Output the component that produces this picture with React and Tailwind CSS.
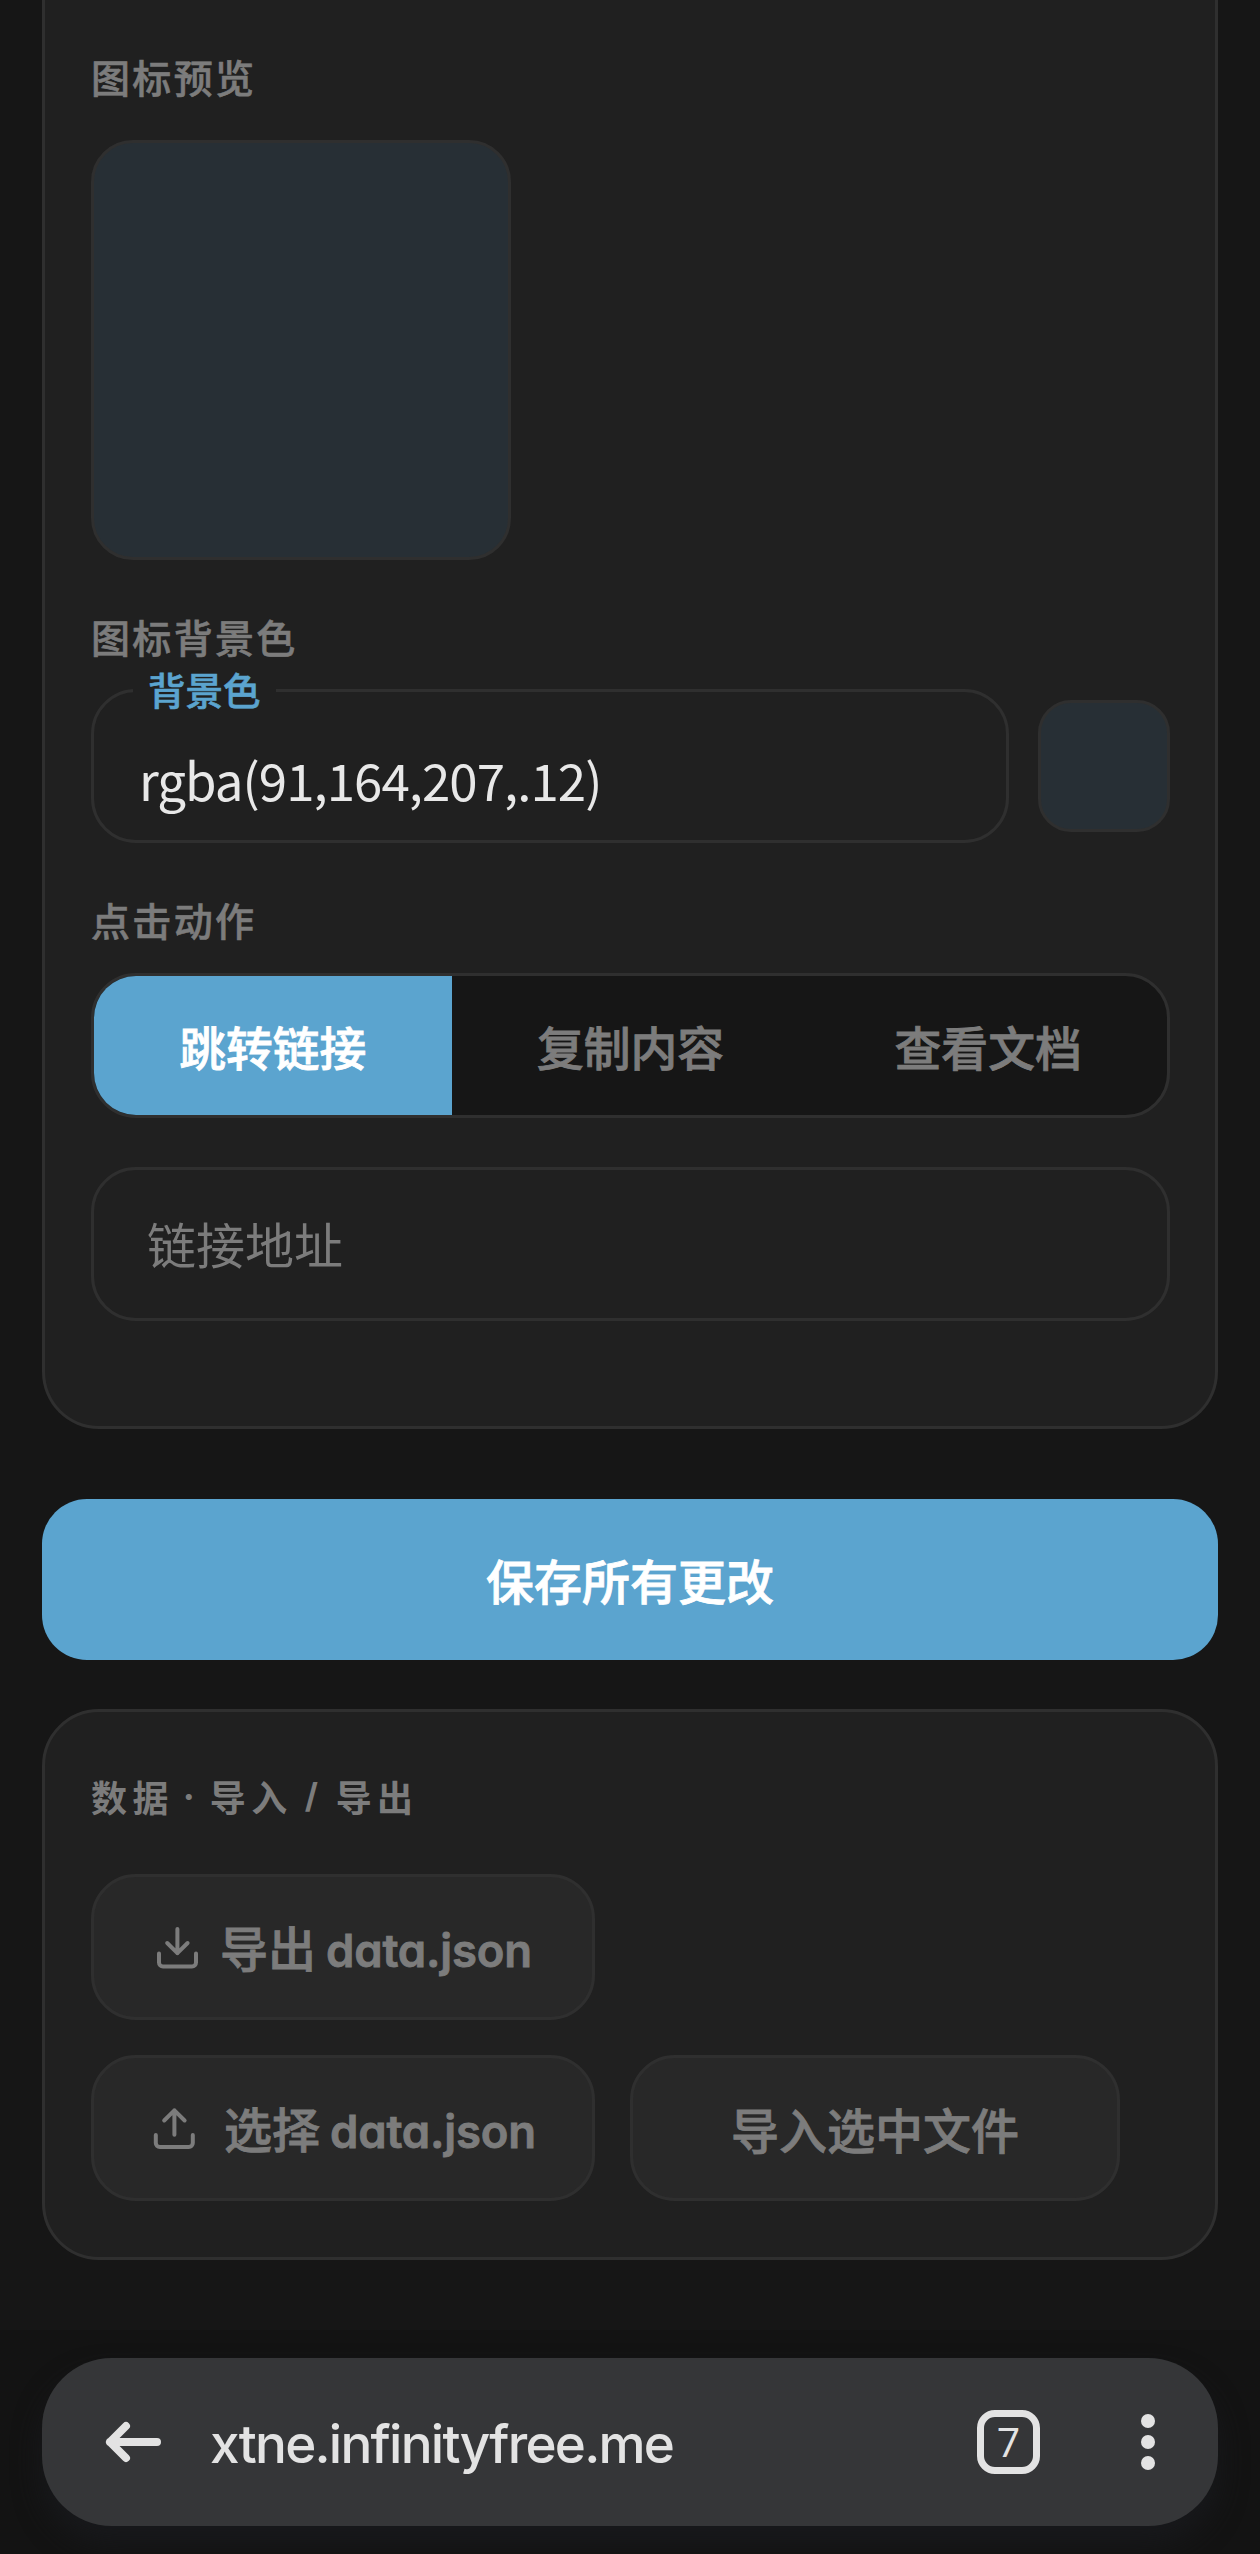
const tabs = ["跳转链接", "复制内容", "查看文档"];

const DownloadIcon = () => (
  <svg
    width="48"
    height="48"
    viewBox="0 0 48 48"
    fill="none"
    stroke="currentColor"
    strokeWidth="4"
    strokeLinecap="round"
    strokeLinejoin="round"
    className="shrink-0"
  >
    <path d="M24.4 6v24.2M14.2 20l10.2 10.2L34.6 20" />
    <path d="M6 30.5v9a4 4 0 0 0 4 4h29a4 4 0 0 0 4-4v-9" />
  </svg>
);

const UploadIcon = () => (
  <svg
    width="48"
    height="48"
    viewBox="0 0 48 48"
    fill="none"
    stroke="currentColor"
    strokeWidth="4"
    strokeLinecap="round"
    strokeLinejoin="round"
    className="shrink-0"
  >
    <path d="M24.4 30.7V6.3M14.2 16.5L24.4 6.3l10.2 10.2" />
    <path d="M5.8 31v8a4 4 0 0 0 4 4h29a4 4 0 0 0 4-4v-8" />
  </svg>
);

const FieldLabel = ({ children }) => (
  <div className="h-10 text-[39px] leading-9 font-medium tracking-[2.34px] text-[#7c7c7c] [-webkit-text-stroke:0.6px]">
    {children}
  </div>
);

const FileName = ({ children }) => (
  <span className="ml-[10px] font-['Inter',sans-serif] text-[45.5px] font-semibold tracking-[-0.2px] [font-feature-settings:'cv11']">
    {children}
  </span>
);

const ItemCard = () => (
  <section className="h-[1429px] rounded-b-[57px] border-x-3 border-b-3 border-[#2f2f2f] bg-[#202020] pt-[58px] pr-[45px] pl-[46px]">
    <FieldLabel>图标预览</FieldLabel>
    <div className="mt-[42px] mb-[58px] size-[420px] rounded-[42px] border-3 border-[#2f2f2f] bg-[#272f35]" />

    <FieldLabel>图标背景色</FieldLabel>
    <div className="mt-[31px] mb-[58px] flex items-center justify-between">
      <div className="relative flex h-[154px] w-[918px] items-center rounded-[45px] border-3 border-[#2f2f2f] pt-[25px] pl-[45px]">
        <span className="absolute -top-[23px] left-[39px] bg-[#202020] px-[15px] text-[37.5px] leading-10 font-medium text-[#5ba4cf] [-webkit-text-stroke:0.6px]">
          背景色
        </span>
        <span className="text-[51px] leading-[60px] tracking-[-0.96px] text-[#e8e8e8]">
          rgba(91,164,207,.12)
        </span>
      </div>
      <div className="size-[132px] rounded-[33px] border-3 border-[#2f2f2f] bg-[#272f35]" />
    </div>

    <FieldLabel>点击动作</FieldLabel>
    <div className="mt-8 grid h-[145px] grid-cols-3 overflow-hidden rounded-[45px] border-3 border-[#2f2f2f] bg-[#161616]">
      {tabs.map((tab, index) => (
        <button
          key={tab}
          className={`pt-0.5 text-[46.8px] font-medium [-webkit-text-stroke:0.8px] ${
            index === 0 ? "bg-[#5ba4cf] text-white" : "text-[#7c7c7c]"
          }`}
        >
          {tab}
        </button>
      ))}
    </div>

    <div className="mt-[49px] flex h-[154px] items-center rounded-[45px] border-3 border-[#2f2f2f] pb-0.5 pl-[53px] text-[49px] text-[#7c7c7c]">
      链接地址
    </div>
  </section>
);

const DataCard = () => (
  <section className="mt-[49px] h-[551px] rounded-[57px] border-3 border-[#2f2f2f] bg-[#202020] pt-[66px] pr-[45px] pl-[46px]">
    <h2 className="flex h-10 text-[36px] leading-9 font-bold tracking-[5.4px] text-[#7c7c7c]">
      数据
      <span className="w-9 pl-[9px] font-['Inter',sans-serif] tracking-normal">·</span>
      导入
      <span className="w-[43px] pl-3 font-['Inter',sans-serif] text-[34px] font-bold tracking-normal">
        /
      </span>
      导出
    </h2>
    <div className="mt-14 flex flex-col gap-[35px] text-[48px] font-medium text-[#7c7c7c] [-webkit-text-stroke:0.8px]">
      <button className="flex h-[146px] w-[504px] items-center rounded-[45px] border-3 border-[#2f2f2f] bg-[#282828] pl-[59px]">
        <DownloadIcon />
        <span className="ml-[19px] pt-0.5 whitespace-nowrap">
          导出
          <FileName>data.json</FileName>
        </span>
      </button>
      <div className="flex gap-[35px]">
        <button className="flex h-[146px] w-[504px] items-center rounded-[45px] border-3 border-[#2f2f2f] bg-[#282828] pl-[56px]">
          <UploadIcon />
          <span className="ml-[26px] pt-0.5 whitespace-nowrap">
            选择
            <FileName>data.json</FileName>
          </span>
        </button>
        <button className="h-[146px] w-[490px] rounded-[45px] border-3 border-[#2f2f2f] bg-[#282828]">
          导入选中文件
        </button>
      </div>
    </div>
  </section>
);

const BrowserBar = () => (
  <footer className="mt-[70px] h-[224px] overflow-hidden bg-[#131313] px-[42px] pt-7">
    <div className="flex h-[168px] items-center rounded-[70px] bg-[#353638] pl-[62px] text-[#e3e3e3] shadow-[0_18px_28px_#18191c]">
      <svg
        width="60"
        height="48"
        viewBox="0 0 60 48"
        fill="none"
        stroke="currentColor"
        strokeWidth="8"
        strokeLinecap="round"
        strokeLinejoin="round"
      >
        <path d="M53 24H6M22 8L6 24l16 16" />
      </svg>
      <span className="ml-[46px] w-[767px] pt-1.5 font-['Inter',sans-serif] text-[53px] font-medium tracking-[-1.75px]">
        xtne.infinityfree.me
      </span>
      <div className="flex h-16 w-[63px] items-center justify-center rounded-[18px] border-7 border-[#e3e3e3] font-['Open_Sans',sans-serif] text-[41px]">
        7
      </div>
      <div className="ml-[101px] flex flex-col gap-[7px]">
        <i className="size-[14px] rounded-full bg-[#e3e3e3]" />
        <i className="size-[14px] rounded-full bg-[#e3e3e3]" />
        <i className="size-[14px] rounded-full bg-[#e3e3e3]" />
      </div>
    </div>
  </footer>
);

const App = () => {
  return (
    <div className="h-[2554px] w-[1260px] overflow-hidden bg-[#161616] font-['Noto_Sans_CJK_SC',sans-serif]">
      <main className="px-[42px]">
        <ItemCard />
        <button className="mt-[70px] block h-[161px] w-full rounded-[45px] bg-[#5ba4cf] pb-0.5 text-[48px] font-medium text-white [-webkit-text-stroke:0.8px]">
          保存所有更改
        </button>
        <DataCard />
      </main>
      <BrowserBar />
    </div>
  );
};

export default App;
